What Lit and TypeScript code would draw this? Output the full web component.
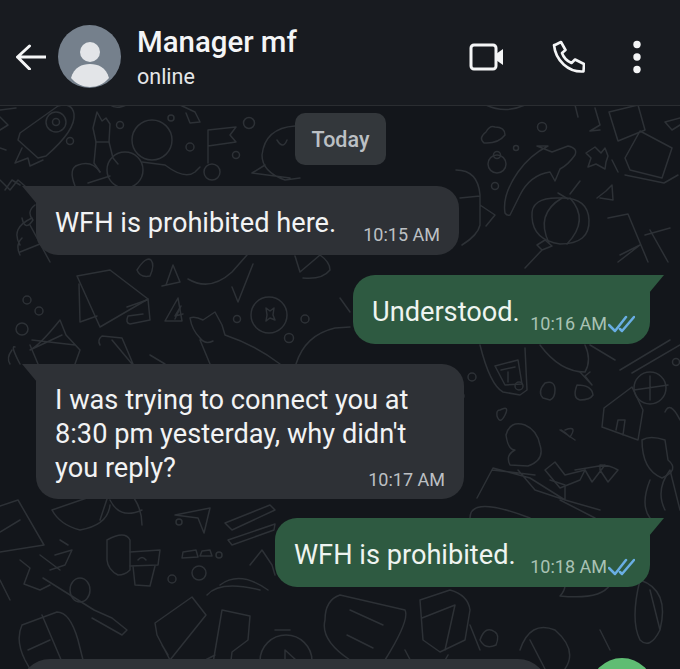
import { LitElement, html, css, svg, nothing } from 'lit';
import { customElement } from 'lit/decorators.js';
import { styleMap } from 'lit/directives/style-map.js';

// wallpaper doodles, in page coordinates
const doodlePaths = [
  // rocket
  'M20 133 L58 106 Q72 102 74 114 Q76 130 46 156 L38 158 L18 140 Z',
  'M22 148 L15 163 L28 158 L30 166 L43 160',
  // astronaut
  'M97 112 L102 121 L106 118 L110 124 L109 142 L96 142 L93 128 Z',
  'M96 142 L94 163 L100 172 M109 142 L113 158 L118 164',
  'M75 186 Q68 168 78 165 Q92 160 100 172 M88 183 L110 176',
  'M142 162 L165 165 Q185 180 195 172 L200 167',
  // flag
  'M208 163 L208 130 L236 127 L230 135 L236 142 L208 146',
  // planet
  'M295 126 Q265 128 262 155 Q262 172 285 180 L300 178 M265 165 L252 173 L290 178',
  'M277 140 Q283 150 287 140',
  'M0 110 L16 108 M0 117 L8 125 L0 130 M0 148 L6 150 M5 190 L12 180 L20 185',
  'M180 105 L195 112 L200 122 L190 123 L186 113 M110 105 Q117 110 128 104',
  // right of the pill
  'M486 105 Q505 114 525 105 M575 105 L578 117 M595 108 L600 125 L590 131 L600 130',
  'M609 112 L638 105 L645 130 L618 141 Z',
  'M640 131 L672 148 L662 178 L630 170 L625 158 Z',
  'M625 175 L664 183 L678 175 M612 160 L618 172',
  'M680 118 L665 122 L672 130 L680 125',
  'M486 132 Q478 138 484 143 Q498 144 505 135 Q505 127 495 127 Q490 125 486 132 Z',
  // fish
  'M505 213 Q502 195 518 172 Q530 155 548 146 L537 146 L552 152 L568 146 Q578 148 575 155 Q568 165 560 169 L555 181 L550 172 Q530 175 520 195 Q515 205 510 215 Q507 216 505 213 Z',
  // star
  'M595 147 L601 153 L605 148 L608 156 L606 162 L605 169 L596 164 L588 167 L591 158 L586 153 Z',
  'M597 198 L606 191 L612 185 L613 200 L600 198',
  // lantern
  'M560 198 Q530 197 532 217 Q533 240 560 244 Q590 244 589 220 Q588 197 560 198 Z',
  'M562 198 Q535 214 549 243 M570 198 Q590 220 567 244 M570 194 L580 181 M568 199 L558 193',
  'M545 240 L552 246 L542 250 L537 245 Z M542 250 L525 268',
  'M456 170 Q478 170 480 195 L480 225 Q478 235 462 245 M460 198 L480 196 M480 205 L495 215 L486 226',
  'M608 218 L628 214 L648 262 M650 230 L668 262 M645 235 L670 228 M620 255 L640 245 L618 262',
  // left of bubble 1
  'M0 180 L10 190 L18 180 L25 186 M35 205 Q26 212 33 220 Q25 232 22 218',
  'M20 245 Q10 228 32 218 M20 255 Q15 245 22 238 M20 252 L60 236 M30 225 L50 262',
  // band under bubble 1
  'M137 270 Q146 256 151 260 Q155 265 150 276 Q140 278 137 270 Z',
  'M166 285 L173 265 L180 282 L162 286',
  'M188 279 Q210 292 232 272 L247 255 M232 287 L238 302 L253 264',
  'M295 256 L300 272 L320 255 Q330 262 330 270 Q322 280 303 278',
  // megaphone
  'M77 276 L110 270 L148 299 L100 327 Z',
  'M79 284 L80 322 L97 316 M148 299 L150 320 L130 324 Q125 323 128 316 L143 314 M127 307 L147 300',
  // compass circle and star
  'M251 315 a18 18 0 1 0 36 0 a18 18 0 1 0 -36 0',
  'M266 308 L270 311 L274 308 L273 315 L275 320 L270 318 L266 321 L267 315 Z',
  'M175 319 L181 306 L175 316 L183 314',
  // dog
  'M190 318 Q195 316 203 320 L215 312 L222 325 L225 335 Q255 345 280 364 M190 318 Q192 330 200 338 Q205 345 213 341 M200 340 L210 364',
  'M296 364 Q305 335 335 328 L350 327 M340 298 L350 312',
  'M165 321 L178 298 L182 321 Z',
  // lower left of the band
  'M38 364 L30 345 M30 350 Q40 345 60 320 L66 335 L80 350 L75 364 M32 340 L75 345 M30 350 L62 335',
  'M12 350 Q6 358 10 364 M20 364 Q10 345 15 347',
  'M100 345 Q97 340 102 336 L122 338 L128 352 L133 364 M112 340 L132 364 M150 355 L165 364',
  // right side, below bubble 2
  'M480 345 Q490 385 503 392 L520 395 L527 390 L525 348 M495 366 L518 360 L522 384 L505 385 Z',
  'M501 370 L515 367 M508 372 L508 382',
  'M540 345 Q560 372 585 372 Q592 360 585 345',
  'M580 372 L592 385 L585 376 L590 372',
  'M590 345 L615 360 M620 370 L670 340 M632 373 L680 345',
  'M545 383 Q555 380 555 390 Q555 398 550 400 L543 398 Q537 392 545 383 Z',
  'M577 385 Q592 385 593 395 Q590 400 580 400 Q572 398 577 385 Z',
  // house
  'M604 408 L632 387 L643 410 L638 440 L602 427 Z M616 430 L618 420 L625 420 L623 435',
  'M634 388 a16 16 0 1 0 32 0 a16 16 0 1 0 -32 0 M650 376 L650 400 M634 390 L668 385',
  // chick
  'M506 435 Q510 420 525 425 Q537 430 540 445 Q545 460 528 466 L510 465 Q505 455 515 450 Q508 450 506 435 Z',
  'M500 410 Q510 405 505 415 Q500 425 497 416 Q496 410 500 410 Z',
  'M565 430 Q578 425 570 437 Q565 432 561 430 M560 430 L575 440',
  'M600 465 Q610 465 618 470 L608 482 L600 470 Z M575 470 L605 465 L592 482 L585 470',
  // bottom of right column
  'M492 470 L535 475 M477 498 L493 468 L530 478 L565 500 L600 510 M518 470 L535 490 L565 500 L565 485 L550 480',
  'M555 462 L565 475 L585 470 L580 480 L560 488 L545 470 Z',
  'M530 518 Q470 495 470 518 M560 500 L595 518',
  'M650 480 Q640 505 650 518 M665 510 Q655 490 670 470 Q675 490 680 510',
  'M642 440 Q650 435 665 440 L668 460 Q680 470 662 478 Q642 470 642 440 Z',
  'M665 412 Q670 400 680 420',
  // lower left
  'M0 506 L18 500 L44 545 L0 552 M0 532 L20 520',
  'M52 510 Q60 525 80 530 Q108 525 110 505 M52 510 L110 490 M110 490 L100 520',
  'M110 500 Q120 520 142 510 M134 498 Q142 510 142 525',
  'M175 515 L210 508 L204 533 L198 518 L175 515 Z',
  'M225 523 L270 505 L275 510 L232 530 Z M228 540 L275 524 L274 530 L232 545 Z',
  'M107 540 Q125 530 130 540 L130 570 Q125 575 118 575 Q108 570 107 560 Z',
  'M130 552 L160 550 L158 565 L130 566 M133 566 L135 585 L150 586 L155 566 M138 560 Q142 555 146 560',
  'M55 555 L72 550 L65 565 L50 570 M60 540 L68 545',
  'M20 560 L30 568 L24 584 L40 590 L50 585 M40 555 L60 570',
  'M183 552 L196 550 L198 557 L182 558 Z M202 551 L210 550 L212 556 L200 556 Z',
  'M250 565 L262 550 L272 565 L275 575',
  'M70 590 a10 12 0 1 0 20 0 a10 12 0 1 0 -20 0',
  'M220 585 Q240 570 268 590',
  'M0 580 L10 600',
  // bottom band
  'M43 578 L94 610 L112 618 L127 630 L122 635 L92 618',
  'M22 625 L57 612 Q70 612 78 640 L85 668 M22 625 Q15 640 25 660 L30 669 M42 615 L65 669 M28 650 L50 640',
  'M155 623 L192 597 L206 615 L170 660 L157 635 Z M168 655 L162 645',
  'M222 610 L250 616 L248 640 L232 652 L230 669 M212 669 L222 610 M190 668 L215 655',
  'M260 661 a26 26 0 1 0 52 0 a26 26 0 1 0 -52 0 M285 650 L296 660 L285 669 Z M275 630 L290 630',
  'M340 595 L405 610 Q410 620 385 660 Q375 670 350 660 Q320 640 325 620 Q325 600 340 595 Z',
  'M350 610 L383 625 M347 635 L373 648',
  'M420 600 L450 590 Q468 595 470 610 L465 640 L440 652 L423 640 Z M422 618 L455 605 L445 650',
  'M480 640 Q485 625 495 632 Q500 635 496 645 Q485 650 480 640 Z',
  'M520 650 Q530 620 555 630 Q578 650 565 669 M530 640 L545 669',
  'M560 575 Q570 585 560 596 Q600 600 610 585',
  'M640 580 Q670 590 660 630 Q650 650 640 640 Q630 620 640 580 Z M650 590 L660 630',
  'M470 625 L480 650 M405 650 L415 669 M440 669 L448 655 M600 630 L610 650',
  'M207 595 Q220 580 260 590 M100 669 Q115 655 140 665',
];

const doodleDots: [number, number, number][] = [
  [56, 122, 10], [56, 122, 3.5], [70, 141, 3.5], [120, 125, 3.5], [171, 118, 3],
  [249, 123, 5.5], [190, 147, 4], [236, 155, 3.5], [152, 140, 20], [125, 170, 18], [212, 172, 8],
  [542, 127, 4.5], [497, 155, 3.5], [497, 164, 9], [495, 186, 3.5], [516, 148, 2.5],
  [27, 300, 4], [39, 311, 4], [22, 329, 6], [289, 338, 4.5], [237, 319, 3.5],
  [305, 319, 4], [179, 522, 3], [172, 579, 4], [199, 573, 7], [219, 555, 3],
  [519, 386, 4], [472, 377, 4], [676, 362, 3.5], [460, 396, 4],
];

@customElement('chat-header')
export class ChatHeader extends LitElement {
  static styles = css`
    :host {
      display: flex;
      align-items: center;
      height: 106px;
      padding: 8px 38px 0 16px;
      box-sizing: border-box;
      background: #181b20;
      border-bottom: 1px solid #2a2d31;
      color: #f4f5f6;
      font-family: Roboto, sans-serif;
    }

    .back {
      width: 30px;
      height: 26px;
      margin-right: 12px;
    }

    .avatar {
      width: 63px;
      height: 63px;
      margin-right: 16px;
    }

    .who {
      flex: 1;
      display: flex;
      flex-direction: column;
      gap: 7px;
      padding-top: 2px;
    }

    .name {
      font-size: 29.400px;
      line-height: 32px;
      font-weight: 500;
    }

    .status {
      font-size: 21.500px;
      line-height: 24px;
      color: #e4e6e8;
    }

    .actions {
      display: flex;
      align-items: center;
      gap: 47px;
    }
  `;

  render() {
    return html`
      <svg class="back" viewBox="0 0 30 26" fill="none" stroke="#f4f5f6" stroke-width="3" stroke-linecap="round" stroke-linejoin="round">
        <path d="M1.500 13H29.500M13.500 2 1.500 13l12 12"/>
      </svg>
      <svg class="avatar" viewBox="0 0 63 63">
        <circle cx="31.500" cy="31.500" r="31.500" fill="#75808c"/>
        <circle cx="32" cy="27" r="10" fill="#e3e5e8"/>
        <path d="M13 53c3-11 11-14 19-14s16 3 19 14c-5 6-12 9-19 9s-14-3-19-9z" fill="#e3e5e8"/>
      </svg>
      <div class="who">
        <div class="name">Manager mf</div>
        <div class="status">online</div>
      </div>
      <div class="actions">
        <svg width="36" height="28" viewBox="0 0 36 28" fill="none">
          <rect x="2" y="2" width="25" height="24" rx="3" stroke="#f4f5f6" stroke-width="3"/>
          <path d="M27 11l7-5v16l-7-5z" fill="#f4f5f6"/>
        </svg>
        <svg width="33" height="33" viewBox="0 0 33 33" fill="none" stroke="#f4f5f6" stroke-width="2.600" stroke-linejoin="round">
          <path d="M2 5.500 9 2l4.500 8-3.500 3c1.500 4.500 5 8 9.500 10l3.500-3.500 9 4.500-.5 7.500c-15 1-28-11-29.500-26.500z"/>
        </svg>
        <svg width="10" height="36" viewBox="0 0 10 36" fill="#f4f5f6">
          <circle cx="5" cy="5.500" r="3.700"/>
          <circle cx="5" cy="18" r="3.700"/>
          <circle cx="5" cy="30.500" r="3.700"/>
        </svg>
      </div>
    `;
  }
}

@customElement('app-root')
export class AppRoot extends LitElement {
  static styles = css`
    :host {
      display: block;
      position: relative;
      width: 680px;
      height: 669px;
      overflow: hidden;
      background: #13161b;
      font-family: Roboto, sans-serif;
    }

    .wallpaper {
      position: absolute;
      inset: 0;
    }

    .wallpaper * {
      fill: none;
      stroke: #2d3136;
      stroke-width: 1.5;
      stroke-linecap: round;
      stroke-linejoin: round;
    }

    chat-header {
      position: relative;
    }

    .messages {
      position: relative;
      display: flex;
      flex-direction: column;
      gap: 20px;
      padding: 7px 30px 0 36px;
    }

    .day {
      align-self: center;
      width: 91px;
      height: 52px;
      margin: 0 5px 1px 0;
      display: flex;
      align-items: center;
      justify-content: center;
      border-radius: 10px;
      background: #33373b;
      color: #bcc0c4;
      font-size: 21.500px;
      font-weight: 500;
    }

    .bubble {
      position: relative;
      box-sizing: border-box;
      display: grid;
      grid-template-columns: 1fr auto;
      align-items: end;
      border-radius: 0 22px 22px 22px;
      padding: 20px 19px 15px 19px;
      background: #2e3136;
      color: #f2f3f4;
    }

    .bubble::before {
      content: '';
      position: absolute;
      top: 0;
      left: -14px;
      width: 15px;
      height: 18px;
      background: inherit;
      clip-path: polygon(0 0, 100% 0, 100% 100%);
    }

    .in {
      align-self: flex-start;
    }

    .out {
      align-self: flex-end;
      border-radius: 22px 0 22px 22px;
      padding-right: 15px;
      background: #2e5a41;
      color: #eef4f0;
    }

    .out::before {
      left: auto;
      right: -14px;
      clip-path: polygon(0 0, 100% 0, 0 100%);
    }

    .text {
      font-size: 27.200px;
      line-height: 34px;
      white-space: pre-line;
    }

    .foot {
      display: flex;
      align-items: center;
      gap: 1px;
      margin-bottom: -6px;
      font-size: 18px;
      line-height: 22px;
      color: #bdc0c4;
    }

    .out .foot {
      color: #a9c2b4;
    }

    .stacked {
      margin-bottom: -1px;
      padding-top: 19px;
      padding-bottom: 14px;
    }

    .lead {
      grid-column: 1 / -1;
    }

    .composer {
      position: absolute;
      left: 20px;
      top: 659px;
      width: 528px;
      height: 60px;
      border-radius: 30px;
      background: #2f3338;
    }

    .fab {
      position: absolute;
      left: 590px;
      top: 658px;
      width: 64px;
      height: 64px;
      border-radius: 50%;
      background: #5fbd73;
    }
  `;

  private ticks() {
    return html`
      <svg width="27" height="18" viewBox="0 0 27 18" fill="none" stroke="#69aee4" stroke-width="2.500" stroke-linecap="round" stroke-linejoin="round">
        <path d="M1 10l6 6L18 2M12 14l2 2L26 2"/>
      </svg>
    `;
  }

  // lead holds the lines above the one that shares its row with the time
  private bubble(text: string, time: string, width: number, out = false, lead = '') {
    return html`
      <div class="bubble ${out ? 'out' : 'in'} ${lead ? 'stacked' : ''}" style=${styleMap({ width: `${width}px` })}>
        ${lead ? html`<div class="text lead">${lead}</div>` : nothing}
        <div class="text">${text}</div>
        <div class="foot">${time}${out ? this.ticks() : ''}</div>
      </div>
    `;
  }

  render() {
    return html`
      <svg class="wallpaper" width="680" height="669" viewBox="0 0 680 669">
        ${doodlePaths.map((d) => svg`<path d=${d} />`)}
        ${doodleDots.map((c) => svg`<circle cx=${c[0]} cy=${c[1]} r=${c[2]} />`)}
      </svg>
      <chat-header></chat-header>
      <div class="messages">
        <div class="day">Today</div>
        ${this.bubble('WFH is prohibited here.', '10:15 AM', 423)}
        ${this.bubble('Understood.', '10:16 AM', 297, true)}
        ${this.bubble('you reply?', '10:17 AM', 428, false, "I was trying to connect you at\n8:30 pm yesterday, why didn't")}
        ${this.bubble('WFH is prohibited.', '10:18 AM', 375, true)}
      </div>
      <div class="composer"></div>
      <div class="fab"></div>
    `;
  }
}
